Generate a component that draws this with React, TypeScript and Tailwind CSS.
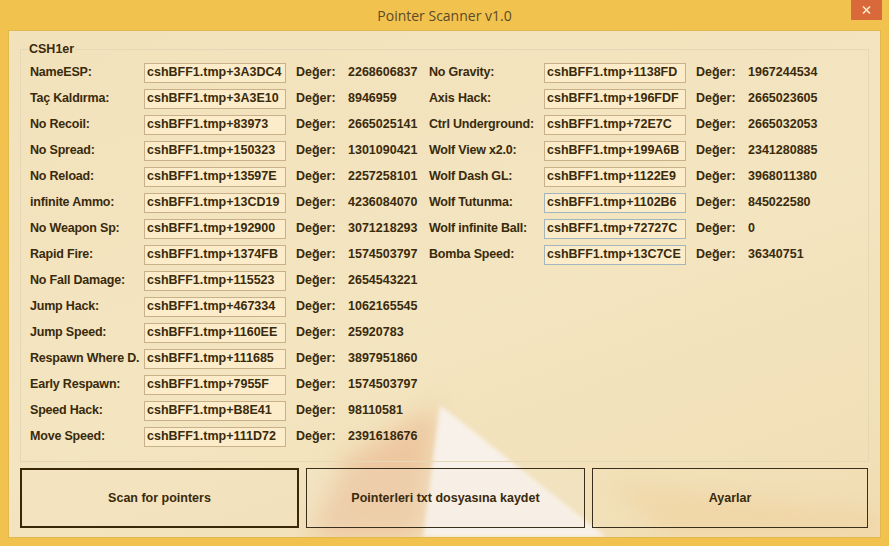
import React from 'react';

type Row = { label: string; ptr: string; value: string; blue?: boolean };

const left: Row[] = [
  { label: 'NameESP:', ptr: 'cshBFF1.tmp+3A3DC4', value: '2268606837' },
  { label: 'Taç Kaldırma:', ptr: 'cshBFF1.tmp+3A3E10', value: '8946959' },
  { label: 'No Recoil:', ptr: 'cshBFF1.tmp+83973', value: '2665025141' },
  { label: 'No Spread:', ptr: 'cshBFF1.tmp+150323', value: '1301090421' },
  { label: 'No Reload:', ptr: 'cshBFF1.tmp+13597E', value: '2257258101' },
  { label: 'infinite Ammo:', ptr: 'cshBFF1.tmp+13CD19', value: '4236084070' },
  { label: 'No Weapon Sp:', ptr: 'cshBFF1.tmp+192900', value: '3071218293' },
  { label: 'Rapid Fire:', ptr: 'cshBFF1.tmp+1374FB', value: '1574503797' },
  { label: 'No Fall Damage:', ptr: 'cshBFF1.tmp+115523', value: '2654543221' },
  { label: 'Jump Hack:', ptr: 'cshBFF1.tmp+467334', value: '1062165545' },
  { label: 'Jump Speed:', ptr: 'cshBFF1.tmp+1160EE', value: '25920783' },
  { label: 'Respawn Where D.', ptr: 'cshBFF1.tmp+111685', value: '3897951860' },
  { label: 'Early Respawn:', ptr: 'cshBFF1.tmp+7955F', value: '1574503797' },
  { label: 'Speed Hack:', ptr: 'cshBFF1.tmp+B8E41', value: '98110581' },
  { label: 'Move Speed:', ptr: 'cshBFF1.tmp+111D72', value: '2391618676' },
];

const right: Row[] = [
  { label: 'No Gravity:', ptr: 'cshBFF1.tmp+1138FD', value: '1967244534' },
  { label: 'Axis Hack:', ptr: 'cshBFF1.tmp+196FDF', value: '2665023605' },
  { label: 'Ctrl Underground:', ptr: 'cshBFF1.tmp+72E7C', value: '2665032053' },
  { label: 'Wolf View x2.0:', ptr: 'cshBFF1.tmp+199A6B', value: '2341280885' },
  { label: 'Wolf Dash GL:', ptr: 'cshBFF1.tmp+1122E9', value: '3968011380' },
  { label: 'Wolf Tutunma:', ptr: 'cshBFF1.tmp+1102B6', value: '845022580', blue: true },
  { label: 'Wolf infinite Ball:', ptr: 'cshBFF1.tmp+72727C', value: '0', blue: true },
  { label: 'Bomba Speed:', ptr: 'cshBFF1.tmp+13C7CE', value: '36340751', blue: true },
];

const PointerRow = ({ row, labelW }: { row: Row; labelW: string }) => (
  <div className="flex items-center h-[26px]">
    <span className={`${labelW} whitespace-nowrap tracking-[-0.2px]`}>{row.label}</span>
    <div
      className={`w-[142px] h-[20px] flex items-center pl-[2px] bg-[#fcecc9] border ${
        row.blue ? 'border-[#a4b6bc]' : 'border-[#c8b08a]'
      }`}
    >
      {row.ptr}
    </div>
    <span className="ml-[10px] w-[52px]">Değer:</span>
    <span className="w-[81px]">{row.value}</span>
  </div>
);

export default function App() {
  return (
    <div
      className="w-[889px] h-[546px] bg-[#f2c24f] flex flex-col text-[#3a2a0c] font-bold text-[12.5px] overflow-hidden"
      style={{ fontFamily: '"Liberation Sans", Arial, sans-serif' }}
    >
      {/* title bar */}
      <div className="h-[30px] flex items-start shrink-0">
        <div className="flex-1 h-full flex items-center justify-center pl-[38px]">
          <span
            className="text-[14px] font-normal text-[#5c4a26]"
            style={{ fontFamily: '"Open Sans", "Noto Sans", sans-serif' }}
          >
            Pointer Scanner v1.0
          </span>
        </div>
        <div className="w-[31px] h-[20px] mr-[7px] bg-[#d9693b] flex items-center justify-center">
          <svg width="9" height="8" viewBox="0 0 9 8">
            <path d="M1 0.5 L8 7.5 M8 0.5 L1 7.5" stroke="#fbe9c8" strokeWidth="1.6" />
          </svg>
        </div>
      </div>

      {/* client area */}
      <div className="relative flex-1 mx-[8px] mb-[8px] border border-[#e2b84e] bg-[linear-gradient(160deg,#f2e2bc_0%,#f3e5c0_55%,#f1ddb4_100%)] flex flex-col px-[11px] pt-[9px] pb-[9px] overflow-hidden">
        {/* wallpaper showing through */}
        <div className="pointer-events-none absolute inset-0 blur-[12px]">
          <div className="absolute inset-0 bg-[#eab48c]/60 [clip-path:polygon(300px_508px,335px_430px,430px_374px,412px_508px)]" />
        </div>
        <div className="pointer-events-none absolute inset-0 blur-[10px]">
          <div className="absolute inset-0 bg-[#f0c27e]/25 [clip-path:polygon(600px_450px,873px_480px,873px_508px,660px_508px)]" />
        </div>
        <div className="pointer-events-none absolute inset-0 blur-[2px]">
          <div className="absolute inset-0 bg-[#f8f3ee]/90 [clip-path:polygon(431px_374px,470px_405px,600px_508px,414px_508px)]" />
        </div>

        <fieldset className="relative border border-[#e6d8b6] pl-[9px] flex-1">
          <legend className="-ml-[2px] px-[1px] font-bold">CSH1er</legend>
          <div className="flex pt-[1px]">
            <div className="flex flex-col">
              {left.map((r) => (
                <PointerRow key={r.label} row={r} labelW="w-[114px]" />
              ))}
            </div>
            <div className="flex flex-col">
              {right.map((r) => (
                <PointerRow key={r.label} row={r} labelW="w-[115px]" />
              ))}
            </div>
          </div>
        </fieldset>

        <div className="relative flex gap-[7px] mt-[6px] h-[60px] shrink-0">
          <button className="w-[279px] border-2 border-[#3a2708] bg-[#f3e2bf]/40 flex items-center justify-center font-bold">
            Scan for pointers
          </button>
          <button className="w-[279px] border border-[#3a2e1c] bg-[#f6ecd8]/20 flex items-center justify-center font-bold">
            Pointerleri txt dosyasına kaydet
          </button>
          <button className="w-[276px] border border-[#3a2e1c] flex items-center justify-center font-bold">
            Ayarlar
          </button>
        </div>
      </div>
    </div>
  );
}
